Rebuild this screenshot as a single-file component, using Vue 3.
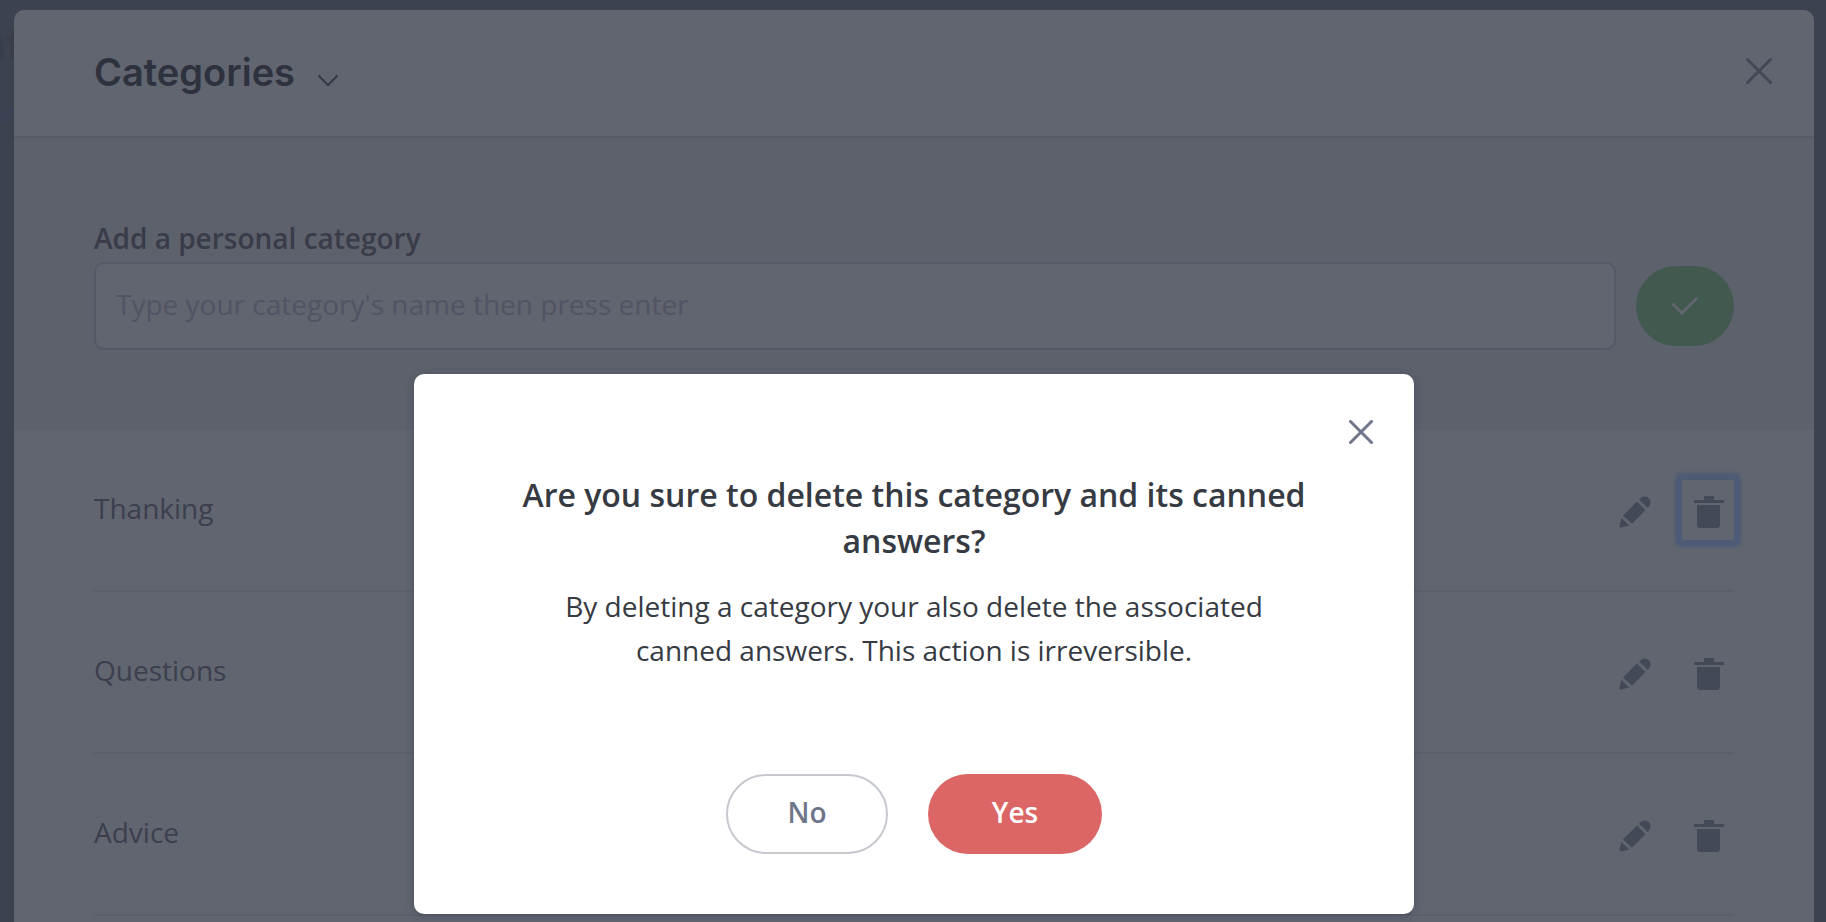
<script setup>
import { ref } from 'vue'

const draft = ref('')
const categories = ref([
  { name: 'Thanking', targeted: true },
  { name: 'Questions', targeted: false },
  { name: 'Advice', targeted: false },
  { name: '', targeted: false },
])
</script>

<template>
  <div class="page">
    <div class="backdrop-text" aria-hidden="true">
      <span class="backdrop-title">nf</span>
      <span class="backdrop-link">w</span>
    </div>

    <main class="panel">
      <header class="panel-header">
        <button type="button" class="title-button">
          <h1>Categories</h1>
          <svg class="chevron" width="22" height="14" viewBox="0 0 22 14" aria-hidden="true">
            <path d="M1.5 1.5 L11 11 L20.500 1.500" />
          </svg>
        </button>
        <button type="button" class="icon-button" aria-label="Close categories">
          <svg class="cross" width="28" height="28" viewBox="0 0 28 28" aria-hidden="true">
            <path d="M2.500 2.500 L25.500 25.500 M25.500 2.500 L2.500 25.500" />
          </svg>
        </button>
      </header>

      <form class="add-form" @submit.prevent>
        <label for="category-name">Add a personal category</label>
        <div class="add-row">
          <input
            id="category-name"
            v-model="draft"
            type="text"
            placeholder="Type your category's name then press enter"
          />
          <button type="submit" class="confirm" aria-label="Add category">
            <svg width="28" height="20" viewBox="0 0 28 20" aria-hidden="true">
              <path d="M2.500 8.500 L11 17 L25.500 2.500" />
            </svg>
          </button>
        </div>
      </form>

      <ul class="category-list">
        <li v-for="(category, index) in categories" :key="index">
          <span class="name">{{ category.name }}</span>
          <div class="actions">
            <button type="button" class="action" aria-label="Edit category">
              <svg width="32" height="32" viewBox="0 0 32 32" aria-hidden="true">
                <path d="M2.300 22 L10.300 29.600 L2 31.500 Q0.300 31.800 0.500 30 Z" />
                <path d="M4 19.500 L18 5.500 L26.500 14 L13 27.700 Z" />
                <path d="M20 3.500 Q23 0.500 25.500 0.500 Q31.500 0.800 31.500 6.500 Q31.500 9.500 28.700 12 Z" />
              </svg>
            </button>
            <button
              type="button"
              class="action"
              :class="{ targeted: category.targeted }"
              aria-label="Delete category"
            >
              <svg width="32" height="32" viewBox="-2 0 32 32" aria-hidden="true">
                <path d="M0 4 H10 V1 Q10 0 11 0 H19 Q20 0 20 1 V4 H30 V7 H0 Z" />
                <path d="M3 9 H26 V28.500 Q26 32 22.500 32 H6.500 Q3 32 3 28.500 Z" />
              </svg>
            </button>
          </div>
        </li>
      </ul>
    </main>

    <div class="overlay">
      <section class="dialog" role="dialog" aria-modal="true" aria-labelledby="dialog-title">
        <button type="button" class="icon-button dialog-close" aria-label="Close dialog">
          <svg class="cross" width="24" height="24" viewBox="0 0 24 24" aria-hidden="true">
            <path d="M1.500 1.500 L22.500 22.500 M22.500 1.500 L1.500 22.500" />
          </svg>
        </button>
        <h2 id="dialog-title">Are you sure to delete this category and its canned answers?</h2>
        <p>By deleting a category your also delete the associated canned answers. This action is irreversible.</p>
        <div class="dialog-actions">
          <button type="button" class="pill outline">No</button>
          <button type="button" class="pill danger">Yes</button>
        </div>
      </section>
    </div>
  </div>
</template>

<style>
body {
  margin: 0;
  background: #3d4250;
}
</style>

<style scoped>
* {
  box-sizing: border-box;
}

.page {
  position: relative;
  height: 100vh;
  padding: 10px 12px 0 14px;
  overflow: hidden;
  background: #3d4250;
  font-family: "Open Sans", "Noto Sans", sans-serif;
  font-size: 28px;
  line-height: 44px;
}

button {
  padding: 0;
  border: 0;
  background: none;
  color: inherit;
  font: inherit;
  cursor: pointer;
}

svg {
  display: block;
}

.backdrop-text {
  position: absolute;
  top: 22px;
  right: calc(100% - 22px);
  display: flex;
  flex-direction: column;
  align-items: flex-end;
  gap: 24px;
}

.backdrop-title {
  color: #393d4a;
  font-size: 40px;
  font-weight: 700;
}

.backdrop-link {
  padding-right: 0;
  color: #3a4156;
}

.panel {
  position: relative;
  border-radius: 10px 10px 0 0;
  background: #616570;
}

.panel-header {
  display: flex;
  align-items: center;
  justify-content: space-between;
  height: 128px;
  padding: 0 41px 4px 80px;
  border-bottom: 2px solid #575b66;
}

.title-button {
  display: flex;
  align-items: center;
  gap: 22px;
  color: #2e323e;
}

h1 {
  margin: 2px 0 0;
  font-family: Inter, sans-serif;
  font-size: 38px;
  font-weight: 600;
  line-height: 48px;
}

.chevron {
  margin-top: 20px;
  fill: none;
  stroke: #353945;
  stroke-width: 2;
}

.cross {
  fill: none;
  stroke: #444856;
  stroke-width: 3;
  stroke-linecap: round;
}

.add-form {
  padding: 78px 80px 80px;
  background: #5d616c;
}

label {
  display: block;
  height: 46px;
  color: #383c49;
  font-weight: 600;
}

.add-row {
  display: flex;
  align-items: center;
  gap: 20px;
}

input {
  flex: 1;
  min-width: 0;
  height: 88px;
  padding: 0 20px 4px;
  border: 2px solid #555965;
  border-radius: 10px;
  background: #616570;
  color: #383c49;
  font: inherit;
  outline: none;
}

input::placeholder {
  color: #505463;
  opacity: 1;
}

.confirm {
  display: grid;
  place-items: center;
  width: 98px;
  height: 80px;
  border-radius: 40px;
  background: #42594f;
}

.confirm path {
  fill: none;
  stroke: #616570;
  stroke-width: 3;
  stroke-linecap: round;
}

.category-list {
  margin: 0;
  padding: 0 80px;
  list-style: none;
}

li {
  display: flex;
  align-items: center;
  justify-content: space-between;
  height: 162px;
  border-bottom: 2px solid #5b5f6a;
  color: #3b3f4e;
}

.name {
  padding-bottom: 4px;
}

.actions {
  display: flex;
  gap: 21px;
}

.action {
  display: grid;
  place-items: center;
  width: 52px;
  height: 60px;
  padding-top: 4px;
  fill: #444957;
}

.targeted {
  border-radius: 2px;
  box-shadow: 0 0 3px 7px #4d5b76;
}

.overlay {
  position: absolute;
  inset: 0;
  display: flex;
  align-items: flex-end;
  justify-content: center;
  padding: 0 0 8px 2px;
}

.dialog {
  position: relative;
  width: 1000px;
  max-width: 100%;
  padding: 98px 100px 60px;
  border-radius: 10px;
  background: #fff;
  box-shadow: 0 2px 8px rgba(40, 48, 64, 0.3);
  color: #363a42;
  text-align: center;
}

.dialog-close {
  position: absolute;
  top: 46px;
  right: 41px;
}

.dialog-close .cross {
  stroke: #70768a;
}

h2 {
  margin: 0 0 20px;
  font-size: 32px;
  font-weight: 600;
  line-height: 46px;
}

p {
  margin: 0;
  padding: 0 20px;
}

.dialog-actions {
  display: flex;
  justify-content: center;
  gap: 40px;
  margin-top: 102px;
}

.pill {
  height: 80px;
  padding-bottom: 4px;
  border-radius: 40px;
  font-weight: 600;
}

.outline {
  width: 162px;
  border: 2px solid #c5c8ce;
  color: #70768a;
}

.danger {
  width: 174px;
  background: #db6665;
  color: #fff;
}
</style>
